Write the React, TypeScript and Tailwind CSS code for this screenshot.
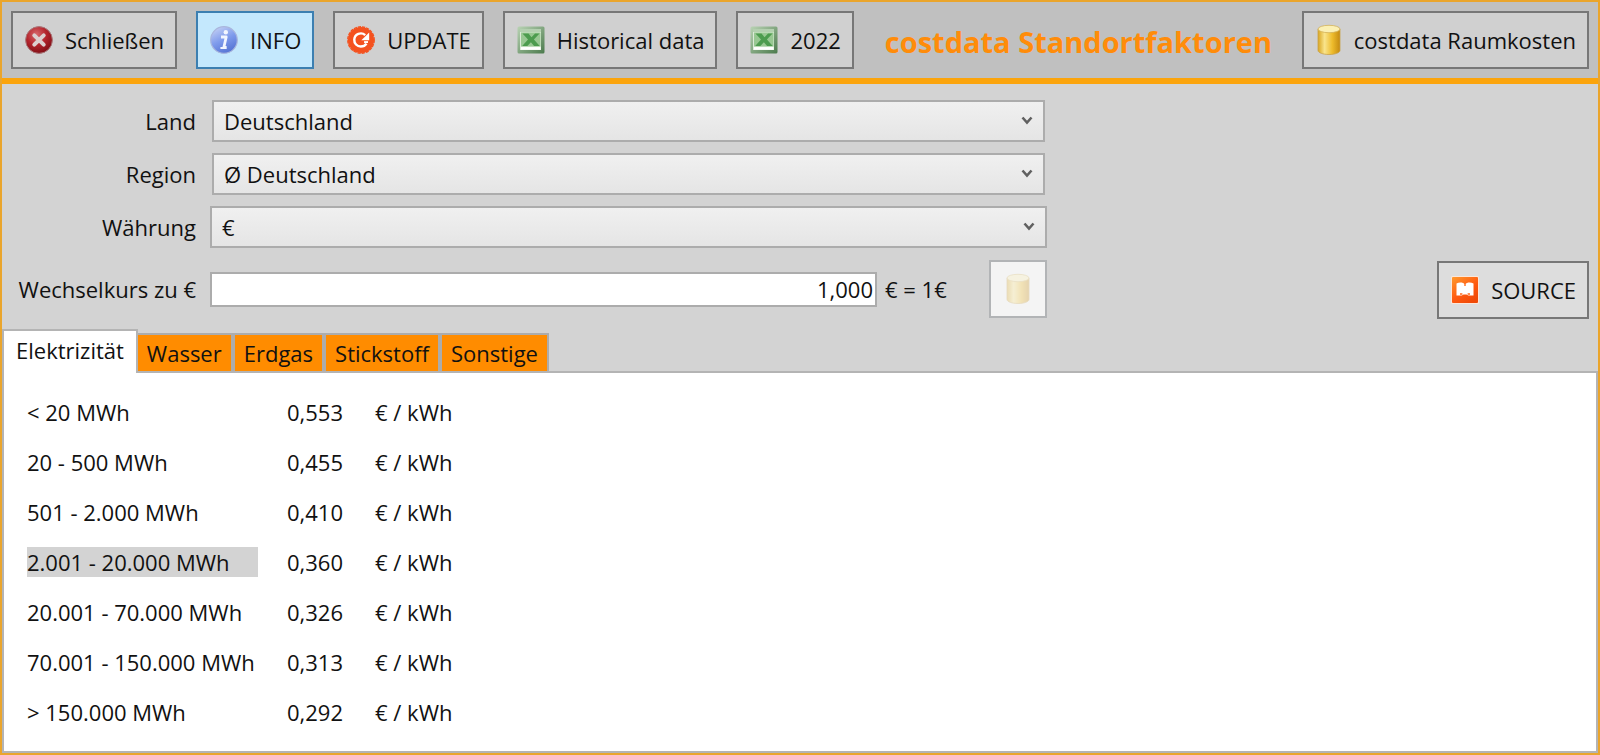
import { useState, type ReactNode } from "react";

function CloseIcon() {
  return (
    <svg viewBox="0 0 28 28" className="size-7 shrink-0" aria-hidden="true">
      <defs>
        <radialGradient id="closeBall" cx="0.4" cy="0.3" r="0.75">
          <stop offset="0" stopColor="#d8686c" />
          <stop offset="0.5" stopColor="#b3242c" />
          <stop offset="1" stopColor="#7c0d14" />
        </radialGradient>
      </defs>
      <circle cx="14" cy="14" r="13.4" fill="url(#closeBall)" stroke="#a8787a" strokeWidth="1" />
      <path d="M9.3 9.3l9.4 9.4M18.7 9.3l-9.4 9.4" stroke="#dccfcf" strokeWidth="4" strokeLinecap="round" />
    </svg>
  );
}

function InfoIcon() {
  return (
    <svg viewBox="0 0 28 28" className="size-7 shrink-0" aria-hidden="true">
      <defs>
        <linearGradient id="infoBall" x1="0.2" y1="0" x2="0.7" y2="1">
          <stop offset="0" stopColor="#c4d0f4" />
          <stop offset="0.5" stopColor="#7f9bec" />
          <stop offset="1" stopColor="#5371d2" />
        </linearGradient>
      </defs>
      <circle cx="14" cy="14" r="13.3" fill="url(#infoBall)" stroke="#a9b6dd" strokeWidth="1.2" />
      <circle cx="15.8" cy="6.3" r="2.2" fill="#f3f6ff" />
      <path d="M11 11h5.200l-2.400 10.500h2.800" fill="none" stroke="#f3f6ff" strokeWidth="2.800" strokeLinejoin="round" />
      <path d="M10.4 22h5.800" stroke="#f3f6ff" strokeWidth="2" />
    </svg>
  );
}

function UpdateIcon() {
  return (
    <svg viewBox="0 0 30 30" className="size-7 shrink-0" aria-hidden="true">
      <circle cx="15" cy="15" r="14" fill="#f4511e" />
      <circle cx="15" cy="15" r="14.200" fill="none" stroke="#f4511e" strokeWidth="1.400" strokeDasharray="3.500 1" />
      <path d="M19.500 9.800A7 7 0 0 0 7.800 14.500a7 7 0 0 0 7 7.500c2.600 0 4.800-1.200 6-3.200" fill="none" stroke="#fff" strokeWidth="2.600" />
      <path d="M23.800 7v8.400h-8.400z" fill="#fff" />
      <path d="M22.500 17.200h-4.200" stroke="#fff" strokeWidth="2" />
    </svg>
  );
}

function ExcelIcon() {
  return (
    <svg viewBox="0 0 28 28" className="size-7 shrink-0" aria-hidden="true">
      <defs>
        <linearGradient id="sheetFrame" x1="0" y1="0" x2="1" y2="1">
          <stop offset="0" stopColor="#b9d3b4" />
          <stop offset="1" stopColor="#4b7a4c" />
        </linearGradient>
      </defs>
      <rect x="0.5" y="0.5" width="27" height="27" rx="1.5" fill="url(#sheetFrame)" />
      <rect x="3" y="3" width="21" height="21" fill="#dcebd8" />
      <rect x="3" y="3" width="21" height="3" fill="#b4d0b0" />
      <path d="M4 6.500h19.500v14H4z" fill="#98c892" />
      <path d="M5.500 7.500h6l3 3.700 3.600-3.700h4.400l-5.600 6 5.800 6.500h-5.600l-3.200-3.800-3.600 3.800H5.200l5.800-6.500z" fill="#4c9c4e" />
      <path d="M4 22.400h19.500" stroke="#fff" strokeWidth="2.600" />
    </svg>
  );
}

function DatabaseIcon({ faded = false }: { faded?: boolean }) {
  return (
    <svg viewBox="0 0 26 32" className={faded ? "h-8 w-[26px] shrink-0 opacity-30" : "h-8 w-[26px] shrink-0"} aria-hidden="true">
      <defs>
        <linearGradient id="drum" x1="0" x2="1">
          <stop offset="0" stopColor="#d9a520" />
          <stop offset="0.3" stopColor="#f9e48c" />
          <stop offset="0.65" stopColor="#eebc2c" />
          <stop offset="1" stopColor="#c48a10" />
        </linearGradient>
      </defs>
      <path d="M2 5v21.500c0 2.200 5 4 11 4s11-1.800 11-4V5z" fill="url(#drum)" stroke="#c9a24a" strokeWidth="0.8" />
      <ellipse cx="13" cy="5" rx="11" ry="3.700" fill="#fbf0b4" stroke="#d3b25a" strokeWidth="0.8" />
    </svg>
  );
}

function BookIcon() {
  return (
    <svg viewBox="0 0 28 28" className="size-7 shrink-0" aria-hidden="true">
      <defs>
        <linearGradient id="bookTile" x1="0" y1="0" x2="0.7" y2="1">
          <stop offset="0" stopColor="#ff9a2e" />
          <stop offset="0.6" stopColor="#ff5a10" />
          <stop offset="1" stopColor="#f04a08" />
        </linearGradient>
      </defs>
      <rect width="28" height="28" rx="1.500" fill="#fbe6da" />
      <rect x="1" y="1" width="26" height="26" rx="1" fill="url(#bookTile)" />
      <path
        d="M5.500 7.400c2.400-1.400 6.500-1.400 8.500 0.600 2-2 6.100-2 8.500-0.600v12.200h-5.200l-1.800-1.200h-3l-1.800 1.200H5.500z"
        fill="#fff"
      />
      <path d="M14 7v3M9 18h2.400M16.600 18H19" stroke="#ff6a1c" strokeWidth="1.400" />
    </svg>
  );
}

type ToolButtonProps = { icon: ReactNode; label: string; tone?: "plain" | "active" | "light" };

function ToolButton({ icon, label, tone = "plain" }: ToolButtonProps) {
  const tones = {
    plain: "border-[#777777] bg-[#d0d0d0]",
    active: "border-[#3c7fb1] bg-[#c4e8fd]",
    light: "border-[#777777] bg-[#dddddd]",
  };
  return (
    <button
      type="button"
      className={`flex h-[58px] shrink-0 items-center gap-3 whitespace-nowrap border-2 pl-3 pr-[11px] ${tones[tone]}`}
    >
      {icon}
      <span>{label}</span>
    </button>
  );
}

type SelectFieldProps = { id: string; label: string; options: string[]; inset?: boolean };

function SelectField({ id, label, options, inset = false }: SelectFieldProps) {
  return (
    <>
      <label htmlFor={id} className="text-right">
        {label}
      </label>
      <div className={inset ? "relative mx-0.5" : "relative"}>
        <select
          id={id}
          className="block h-[42px] w-full appearance-none border-2 border-[#acacac] bg-linear-to-b from-[#f0f0f0] to-[#e5e5e5] pl-2.5 pr-10"
        >
          {options.map((option) => (
            <option key={option}>{option}</option>
          ))}
        </select>
        <svg viewBox="0 0 12 10" className="pointer-events-none absolute right-3 top-4 h-2.5 w-3" aria-hidden="true">
          <path d="M1.500 1.500L6 6.500l4.500-5" fill="none" stroke="#606060" strokeWidth="2.600" />
        </svg>
      </div>
    </>
  );
}

const tabs = ["Elektrizität", "Wasser", "Erdgas", "Stickstoff", "Sonstige"];

const prices = [
  { range: "< 20 MWh", price: "0,553" },
  { range: "20 - 500 MWh", price: "0,455" },
  { range: "501 - 2.000 MWh", price: "0,410" },
  { range: "2.001 - 20.000 MWh", price: "0,360", selected: true },
  { range: "20.001 - 70.000 MWh", price: "0,326" },
  { range: "70.001 - 150.000 MWh", price: "0,313" },
  { range: "> 150.000 MWh", price: "0,292" },
];

export default function App() {
  const [tab, setTab] = useState(tabs[0]);
  const [rate, setRate] = useState("1,000");

  return (
    <div className="flex min-h-screen flex-col border-2 border-[#eaa52c] bg-[#d3d3d3] font-['Open_Sans',sans-serif] text-[22px] leading-[30px] text-[#111111]">
      <header className="flex items-center gap-[19px] border-b-[6px] border-[#fba40c] bg-[#c0c0c0] px-[9px] py-[9px]">
        <ToolButton icon={<CloseIcon />} label="Schließen" />
        <ToolButton icon={<InfoIcon />} label="INFO" tone="active" />
        <ToolButton icon={<UpdateIcon />} label="UPDATE" />
        <ToolButton icon={<ExcelIcon />} label="Historical data" />
        <ToolButton icon={<ExcelIcon />} label="2022" />
        <h1 className="grow whitespace-nowrap pl-3 pt-1 text-[29px] font-bold text-[#ff8c0a]">costdata Standortfaktoren</h1>
        <ToolButton icon={<DatabaseIcon />} label="costdata Raumkosten" />
      </header>

      <form className="grid grid-cols-[194px_minmax(0,837px)_1fr] items-center gap-x-3.5 gap-y-[11px] pb-2.5 pr-[9px] pt-4">
        <SelectField id="land" label="Land" options={["Deutschland"]} inset />
        <span />
        <SelectField id="region" label="Region" options={["Ø Deutschland"]} inset />
        <span />
        <SelectField id="waehrung" label="Währung" options={["€"]} />
        <span />
        <label htmlFor="kurs" className="text-right">
          Wechselkurs zu €
        </label>
        <div className="flex items-center">
          <input
            id="kurs"
            value={rate}
            onChange={(event) => setRate(event.target.value)}
            className="h-[35px] min-w-0 grow border-2 border-[#acacac] bg-white px-0.5 text-right"
          />
          <span className="w-28 shrink-0 pl-2">€ = 1€</span>
          <button
            type="button"
            disabled
            aria-label="Wechselkurs laden"
            className="flex size-[58px] shrink-0 items-center justify-center border-2 border-[#b2b4b6] bg-[#f4f4f4]"
          >
            <DatabaseIcon faded />
          </button>
        </div>
        <div className="flex justify-end pt-0.5">
          <ToolButton icon={<BookIcon />} label="SOURCE" tone="light" />
        </div>
      </form>

      <div role="tablist" className="flex items-end">
        {tabs.map((name) => (
          <button
            key={name}
            type="button"
            role="tab"
            aria-selected={name === tab}
            onClick={() => setTab(name)}
            className={
              name === tab
                ? "relative -mb-0.5 -mr-0.5 h-[44px] border-x-2 border-t-2 border-[#b4b4b4] bg-white px-3 pb-1"
                : "h-[38px] border-x-2 border-t-2 border-[#acacac] bg-[#ff8c00] px-[9px]"
            }
          >
            {name}
          </button>
        ))}
      </div>

      <main className="grow border-2 border-[#b4b4b4] bg-white px-[23px] pb-3 pt-3.5">
        <table className="text-left">
          <tbody>
            {prices.map((row) => (
              <tr key={row.range} className="h-[50px]">
                <th scope="row" className="min-w-[231px] p-0 font-normal">
                  <span className={row.selected ? "block bg-[#d3d3d3]" : "block"}>{row.range}</span>
                </th>
                <td className="py-0 pl-[29px] pr-8">{row.price}</td>
                <td className="p-0">€ / kWh</td>
              </tr>
            ))}
          </tbody>
        </table>
      </main>
    </div>
  );
}
